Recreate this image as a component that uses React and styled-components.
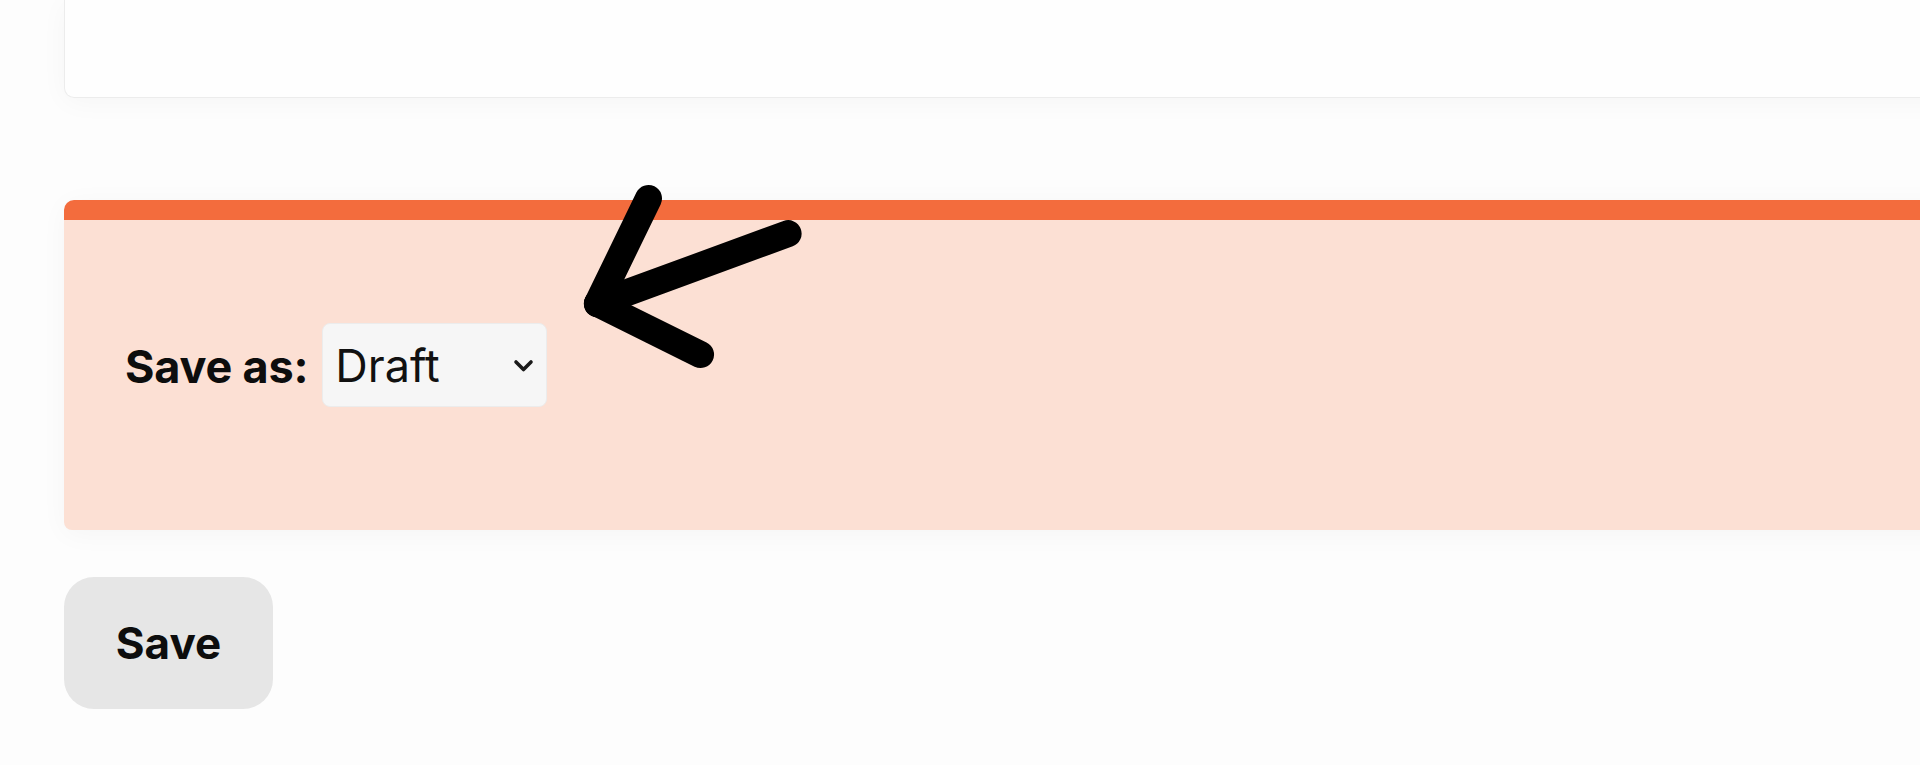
import React from "react";
import styled, { createGlobalStyle } from "styled-components";

const Global = createGlobalStyle`
  html, body { margin: 0; padding: 0; background: #fdfdfd; }
  body { font-family: Inter, "Noto Sans", sans-serif; color: #111; overflow: hidden; }
  * { box-sizing: border-box; }
`;

const Page = styled.div`
  position: relative;
  width: 100%;
  height: 765px;
  padding-left: 64px;
  overflow: hidden;
  display: flex;
  flex-direction: column;
  align-items: flex-start;
`;

const Card = styled.div`
  width: calc(100% + 40px);
  height: 98px;
  flex-shrink: 0;
  background: #fefefe;
  border: 1px solid #ececec;
  border-top: 0;
  border-radius: 0 0 10px 10px;
  box-shadow: 0 4px 28px rgba(0, 0, 0, 0.035);
`;

const Panel = styled.section`
  width: calc(100% + 40px);
  margin-top: 102px;
  flex-shrink: 0;
  background: #fce0d4;
  border-top: 20px solid #f36c3d;
  border-radius: 10px 10px 8px 8px;
  box-shadow: 0 4px 28px rgba(0, 0, 0, 0.035);
  padding: 103px 60px 123px 61px;
`;

const Row = styled.div`
  display: flex;
  align-items: center;
  gap: 14px;
`;

const Label = styled.label`
  font-size: 45px;
  font-weight: 700;
  letter-spacing: -0.2px;
  color: #0d0d0d;
  line-height: 1;
  padding-top: 2px;
`;

const SelectWrap = styled.div`
  position: relative;
  width: 225px;
  height: 84px;
`;

const Select = styled.select`
  appearance: none;
  -webkit-appearance: none;
  width: 100%;
  height: 100%;
  background: #f6f6f6;
  border: 1px solid #ececec;
  border-radius: 8px;
  padding: 0 0 0 12px;
  font-family: Inter, "Noto Sans", sans-serif;
  font-size: 45px;
  font-weight: 400;
  color: #111;
  outline: none;
`;

const Chevron = styled.svg`
  position: absolute;
  left: 190px;
  top: 35px;
  width: 24px;
  height: 16px;
  pointer-events: none;

  path {
    fill: none;
    stroke: #1a1a1a;
    stroke-width: 3.6px;
    stroke-linecap: round;
    stroke-linejoin: round;
  }
`;

const SaveButton = styled.button`
  margin-top: 47px;
  width: 209px;
  height: 132px;
  border: 0;
  border-radius: 30px;
  background: #e6e6e6;
  font-family: Inter, "Noto Sans", sans-serif;
  font-size: 44px;
  font-weight: 700;
  color: #0d0d0d;
  cursor: pointer;
  padding: 0;
`;

const ArrowLayer = styled.div`
  position: absolute;
  left: 570px;
  top: 170px;
  width: 250px;
  height: 210px;
  pointer-events: none;
`;

const T = 27;

const ArrowSeg = styled.div`
  position: absolute;
  height: ${T}px;
  border-radius: ${T / 2}px;
  background: #000;
  transform-origin: ${T / 2}px ${T / 2}px;
`;

function seg(x0, y0, x1, y1) {
  const dx = x1 - x0;
  const dy = y1 - y0;
  const len = Math.hypot(dx, dy);
  const ang = (Math.atan2(dy, dx) * 180) / Math.PI;
  return {
    left: x0 - T / 2,
    top: y0 - T / 2,
    width: len + T,
    transform: `rotate(${ang}deg)`,
  };
}

const segments = [
  seg(78, 28, 27, 133),
  seg(27, 133, 218, 63),
  seg(27, 133, 130, 184),
];

export default function App() {
  return (
    <>
      <Global />
      <Page>
        <Card />
        <Panel>
          <Row>
            <Label htmlFor="save-as">Save as:</Label>
            <SelectWrap>
              <Select id="save-as" defaultValue="draft">
                <option value="draft">Draft</option>
                <option value="published">Published</option>
              </Select>
              <Chevron viewBox="0 0 24 16">
                <path d="M4 4 L11.5 11.5 L19 4" />
              </Chevron>
            </SelectWrap>
          </Row>
        </Panel>
        <SaveButton>Save</SaveButton>
        <ArrowLayer aria-hidden="true">
          {segments.map((s, i) => (
            <ArrowSeg key={i} style={s} />
          ))}
        </ArrowLayer>
      </Page>
    </>
  );
}
